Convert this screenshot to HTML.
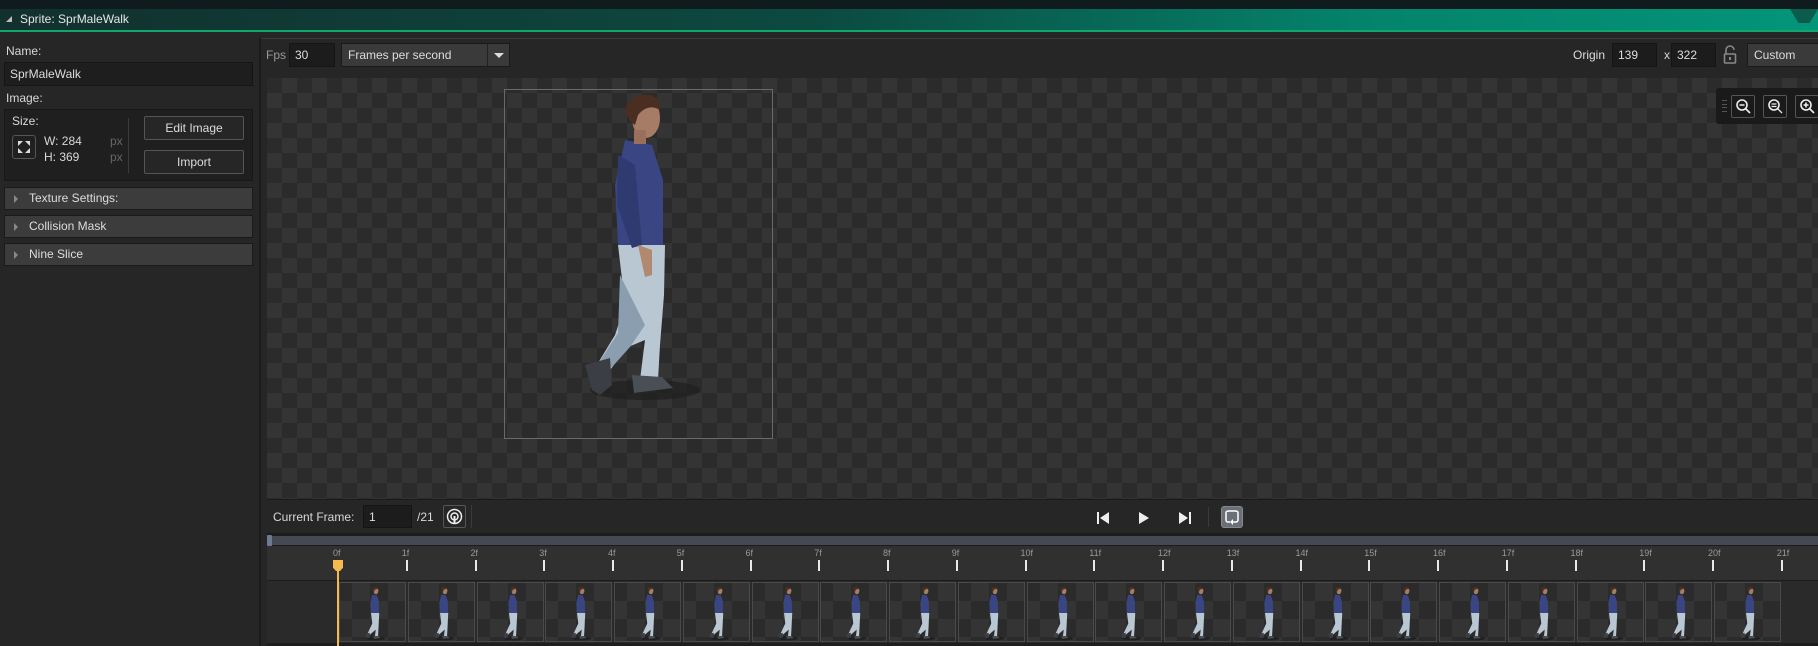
<!DOCTYPE html>
<html><head><meta charset="utf-8"><style>
*{box-sizing:border-box;margin:0;padding:0}
body{width:1818px;height:646px;overflow:hidden;background:#262626;font-family:"Liberation Sans",sans-serif;color:#d8d8d8;font-size:12px;position:relative}
.a{position:absolute}
.inp{position:absolute;background:#1c1c1c;border:1px solid #151515;color:#ddd;padding-left:5px;line-height:22px;font-size:12px}
.btn{position:absolute;border:1px solid #555;border-radius:2px;background:#262626;text-align:center;color:#ddd;line-height:22px}
.bar{position:absolute;left:4px;width:249px;height:23px;background:#3c3c3c;border:1px solid #1a1a1a;line-height:21px;padding-left:24px;color:#ddd}
.bar:before{content:"";position:absolute;left:9px;top:7px;border-left:4px solid #888;border-top:4px solid transparent;border-bottom:4px solid transparent}
.chk{background-color:#2b2b2b;background-image:linear-gradient(45deg,#343434 25%,transparent 25%,transparent 75%,#343434 75%),linear-gradient(45deg,#343434 25%,transparent 25%,transparent 75%,#343434 75%);background-size:30px 30px;background-position:0 0,15px 15px}
.lbl{position:absolute;font-size:9px;color:#9a9a9a}
.tk{position:absolute;top:560px;width:2px;height:11px;background:#e8e8e8}
.fr{position:absolute;top:582px;width:67px;height:60px;border:1px solid #4a4a4a;overflow:hidden}
.fr svg{position:absolute;left:22px;top:2px}
</style></head><body>
<!-- top -->
<div class="a" style="left:0;top:0;width:1818px;height:9px;background:#0f1b1d"></div>
<div class="a" style="left:0;top:9px;width:1818px;height:22px;background:linear-gradient(90deg,#12302e 0%,#0c4a40 45%,#04836c 75%,#03957a 100%)"></div>
<div class="a" style="left:0;top:30px;width:1818px;height:2px;background:#0fa86c"></div>
<div class="a" style="left:1790px;top:9px;width:28px;height:14px;background:#0a5c4c;clip-path:polygon(0 0,100% 0,100% 0,70% 100%,30% 100%)"></div>
<div class="a" style="left:6px;top:16px;border-left:6px solid transparent;border-bottom:6px solid #bbb"></div>
<div class="a" style="left:20px;top:12px;font-size:12px;color:#e6e6e6">Sprite: SprMaleWalk</div>
<!-- left panel -->
<div class="a" style="left:6px;top:44px">Name:</div>
<div class="inp" style="left:4px;top:62px;width:249px;height:24px;background:#1e1e1e">SprMaleWalk</div>
<div class="a" style="left:6px;top:91px">Image:</div>
<div class="a" style="left:4px;top:109px;width:249px;height:72px;background:#1f1f1f;border:1px solid #181818"></div>
<div class="a" style="left:12px;top:114px">Size:</div>
<div class="a" style="left:12px;top:135px;width:24px;height:24px;border:1px solid #555;border-radius:3px;background:#202020"><svg width="22" height="22" viewBox="0 0 22 22" fill="#ddd"><path d="M5 5h5l-5 5zM17 5v5l-5-5zM5 17v-5l5 5zM17 17h-5l5-5z"/></svg></div>
<div class="a" style="left:44px;top:134px">W: 284</div>
<div class="a" style="left:44px;top:150px">H: 369</div>
<div class="a" style="left:110px;top:134px;color:#666">px</div>
<div class="a" style="left:110px;top:150px;color:#666">px</div>
<div class="a" style="left:128px;top:118px;width:1px;height:55px;background:#3a3a3a"></div>
<div class="btn" style="left:144px;top:116px;width:100px;height:24px">Edit Image</div>
<div class="btn" style="left:144px;top:150px;width:100px;height:24px">Import</div>
<div class="bar" style="top:187px">Texture Settings:</div>
<div class="bar" style="top:215px">Collision Mask</div>
<div class="bar" style="top:243px">Nine Slice</div>
<div class="a" style="left:259px;top:38px;width:2px;height:608px;background:#1c1c1c"></div>
<!-- toolbar -->
<div class="a" style="left:262px;top:38px;width:1556px;height:1px;background:#3a3a3a"></div>
<div class="a" style="left:266px;top:48px;color:#999">Fps</div>
<div class="inp" style="left:289px;top:43px;width:46px;height:24px">30</div>
<div class="a" style="left:341px;top:43px;width:169px;height:24px;background:#3a3a3a;border:1px solid #1a1a1a;line-height:22px;padding-left:6px;color:#ddd">Frames per second</div>
<div class="a" style="left:487px;top:44px;width:1px;height:22px;background:#222"></div>
<div class="a" style="left:494px;top:53px;border-top:5px solid #ddd;border-left:5px solid transparent;border-right:5px solid transparent"></div>
<div class="a" style="left:1573px;top:48px;color:#ddd">Origin</div>
<div class="inp" style="left:1612px;top:43px;width:45px;height:24px">139</div>
<div class="a" style="left:1664px;top:48px">x</div>
<div class="inp" style="left:1671px;top:43px;width:45px;height:24px">322</div>
<svg class="a" style="left:1723px;top:45px" width="14" height="20" viewBox="0 0 14 20"><path d="M3 9V5a4 4 0 0 1 8 0" fill="none" stroke="#888" stroke-width="1.6"/><rect x="1.5" y="9" width="11" height="9" rx="1" fill="none" stroke="#888" stroke-width="1.6"/><rect x="6" y="12" width="2" height="3" fill="#888"/></svg>
<div class="a" style="left:1747px;top:43px;width:80px;height:24px;background:#3a3a3a;border:1px solid #1a1a1a;line-height:22px;padding-left:6px;color:#ddd">Custom</div>
<!-- canvas -->
<div class="a chk" style="left:267px;top:78px;width:1551px;height:421px"></div>
<div class="a" style="left:504px;top:89px;width:269px;height:350px;border:1px solid #6a6a6a"></div>
<svg class="a" style="left:570px;top:85px" width="130" height="320" viewBox="0 0 130 320">
<ellipse cx="75" cy="305" rx="55" ry="10" fill="#1f1f1f" opacity=".7"/>
<path d="M48 160 L95 160 L94 210 L90 260 L88 295 L70 295 L75 255 L58 262 L40 285 L28 278 L45 250 L55 220 Z" fill="#b8c7d2"/>
<path d="M50 190 L75 240 L60 262 L42 282 L30 276 L48 248 Z" fill="#8a9eb0"/>
<path d="M15 280 L40 273 L42 300 L30 310 L22 305 Z" fill="#3b3e44"/>
<path d="M62 290 L92 292 L103 303 L64 308 Z" fill="#4a4e55"/>
<path d="M55 55 L82 60 L93 95 L93 160 L48 160 L45 100 Z" fill="#3a4683"/>
<path d="M48 70 L65 80 L72 160 L62 163 L47 120 Z" fill="#2e3a70"/>
<path d="M68 160 L82 165 L82 190 L75 192 Z" fill="#b08970"/>
<ellipse cx="76" cy="33" rx="14" ry="20" fill="#a77c66"/>
<path d="M55 25 Q60 8 80 10 Q92 14 90 25 Q78 18 68 30 L65 40 Q58 36 55 25Z" fill="#4a2e22"/>
<rect x="64" y="45" width="12" height="14" fill="#9a705c"/>
</svg>
<!-- zoom tools -->
<div class="a" style="left:1716px;top:88px;width:102px;height:36px;background:#1a1a1a;border-radius:3px 0 0 3px"></div>
<div class="a" style="left:1722px;top:100px;width:5px;height:12px;border-top:1px solid #555;border-bottom:1px solid #555"><div style="margin-top:3px;height:4px;border-top:1px solid #555;border-bottom:1px solid #555"></div></div>
<div class="a" style="left:1731px;top:95px;width:24px;height:23px;border:1px solid #555;border-radius:2px"><svg width="22" height="21"><circle cx="10" cy="9" r="5" fill="none" stroke="#eee" stroke-width="1.6"/><path d="M13.5 12.5L18 17M7.5 9h5" stroke="#eee" stroke-width="1.6"/></svg></div>
<div class="a" style="left:1763px;top:95px;width:24px;height:23px;border:1px solid #555;border-radius:2px"><svg width="22" height="21"><circle cx="10" cy="9" r="5" fill="none" stroke="#eee" stroke-width="1.6"/><path d="M13.5 12.5L18 17M7.5 8h5M7.5 10.5h5" stroke="#eee" stroke-width="1.3"/></svg></div>
<div class="a" style="left:1795px;top:95px;width:24px;height:23px;border:1px solid #555;border-radius:2px"><svg width="22" height="21"><circle cx="10" cy="9" r="5" fill="none" stroke="#eee" stroke-width="1.6"/><path d="M13.5 12.5L18 17M7.5 9h5M10 6.5v5" stroke="#eee" stroke-width="1.6"/></svg></div>
<!-- controls -->
<div class="a" style="left:267px;top:499px;width:1551px;height:1px;background:#1a1a1a"></div>
<div class="a" style="left:273px;top:510px">Current Frame:</div>
<div class="inp" style="left:363px;top:505px;width:49px;height:23px">1</div>
<div class="a" style="left:417px;top:510px">/21</div>
<div class="a" style="left:443px;top:505px;width:23px;height:23px;border:1px solid #555;border-radius:2px"><svg width="21" height="21"><circle cx="10.5" cy="10.5" r="7" fill="none" stroke="#eee" stroke-width="1.5"/><circle cx="10.5" cy="10.5" r="3.5" fill="none" stroke="#eee" stroke-width="1.5"/><rect x="9.5" y="10" width="2" height="8" fill="#eee"/></svg></div>
<div class="a" style="left:471px;top:505px;width:1px;height:23px;background:#3a3a3a"></div>
<svg class="a" style="left:1096px;top:511px" width="16" height="14"><rect x="1" y="1" width="2" height="12" fill="#eee"/><path d="M13 1L4 7l9 6z" fill="#eee"/></svg>
<svg class="a" style="left:1137px;top:511px" width="14" height="14"><path d="M2 1l10 6-10 6z" fill="#eee"/></svg>
<svg class="a" style="left:1177px;top:511px" width="16" height="14"><path d="M2 1l9 6-9 6z" fill="#eee"/><rect x="12" y="1" width="2" height="12" fill="#eee"/></svg>
<div class="a" style="left:1208px;top:507px;width:1px;height:20px;background:#3a3a3a"></div>
<div class="a" style="left:1221px;top:506px;width:22px;height:22px;background:#6a6f78;border:1px solid #888;border-radius:3px"><svg width="20" height="20"><path d="M8 15H6a2 2 0 0 1-2-2V6a2 2 0 0 1 2-2h8a2 2 0 0 1 2 2v7a2 2 0 0 1-2 2h-3" fill="none" stroke="#fff" stroke-width="1.5"/><path d="M11 12l-3 3 3 3z" fill="#fff"/></svg></div>
<!-- timeline -->
<div class="a" style="left:267px;top:533px;width:1551px;height:113px;background:#1c1c1c"></div>
<div class="a" style="left:267px;top:536px;width:1551px;height:9px;background:#444954"></div>
<div class="a" style="left:267px;top:535px;width:5px;height:11px;background:#6d7a90;border-radius:1px"></div>
<div class="a" style="left:267px;top:546px;width:1551px;height:34px;background:#303030"></div>
<div class="a" style="left:267px;top:581px;width:1551px;height:62px;background:#2a2a2a"></div>
<div class="a" style="left:267px;top:643px;width:1551px;height:3px;background:#1e1e1e"></div>
<div id="tl"></div>
<script>
var h='';for(var i=0;i<=21;i++){var x=338+i*68.75;
h+='<div class="lbl" style="left:'+(x-5)+'px;top:548px">'+i+'f</div>';
if(i>0)h+='<div class="tk" style="left:'+(x-1)+'px"></div>';
if(i<21)h+='<div class="fr chk" style="left:'+(x+1)+'px;background-size:36px 36px;background-position:-6px 0,12px 18px"><svg width="24" height="56" viewBox="0 0 130 320"><ellipse cx="75" cy="305" rx="55" ry="12" fill="#1a1a1a" opacity=".7"/><path d="M48 160L95 160L90 260L88 295L70 295L75 255L40 285L28 278L55 220Z" fill="#b8c7d2"/><path d="M15 280L40 273L42 300L22 305Z" fill="#3b3e44"/><path d="M62 290L92 292L103 303L64 308Z" fill="#4a4e55"/><path d="M55 55L82 60L93 95L93 160L48 160L45 100Z" fill="#3a4683"/><ellipse cx="76" cy="33" rx="14" ry="20" fill="#a77c66"/><path d="M55 25Q60 8 80 10Q92 14 90 25Q78 18 68 30L65 40Q58 36 55 25Z" fill="#4a2e22"/></svg></div>';}
document.getElementById('tl').innerHTML=h;
</script>
<div class="a" style="left:333px;top:560px;width:10px;height:11px;background:#f6b94d;clip-path:polygon(0 0,100% 0,100% 70%,70% 100%,30% 100%,0 70%)"></div>
<div class="a" style="left:337px;top:570px;width:2px;height:76px;background:#f6b94d"></div>
</body></html>
